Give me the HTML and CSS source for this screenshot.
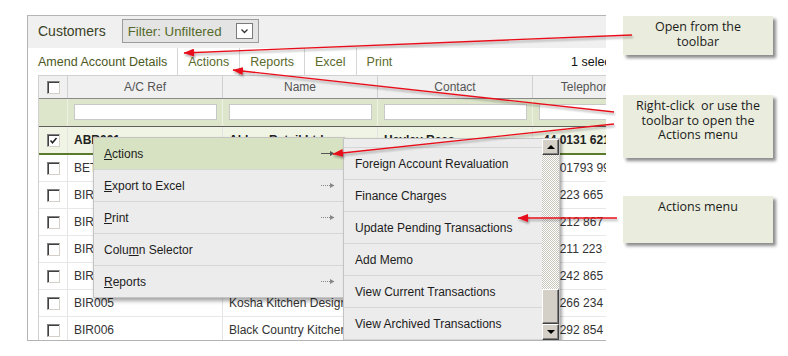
FILE: index.html
```html
<!DOCTYPE html>
<html>
<head>
  <title>Customers - Actions menu</title>
  <link rel="stylesheet" href="styles.css">
</head>
<body>
  <div class="page">
    <div class="grid-panel">
      <div class="panel-head">
        <span class="panel-title">Customers</span>
        <div class="filter">
          <span>Filter: Unfiltered</span>
          <span class="filter-btn">
            <svg width="9" height="6" viewBox="0 0 9 6"><path d="M1.5 1.5 L4.5 4.5 L7.5 1.5" stroke="#333" stroke-width="1.3" fill="none"/></svg>
          </span>
        </div>
      </div>

      <div class="toolbar">
        <span class="tool tool-main">Amend Account Details</span>
        <span class="tool">Actions</span>
        <span class="tool">Reports</span>
        <span class="tool">Excel</span>
        <span class="tool tool-last">Print</span>
        <span class="sel-count">1 selected</span>
      </div>

      <div class="grid">
        <div class="row head-row">
          <div class="cell cell-check"><span class="cb"></span></div>
          <div class="cell">A/C Ref</div>
          <div class="cell">Name</div>
          <div class="cell">Contact</div>
          <div class="cell">Telephone</div>
        </div>
        <div class="row filter-row">
          <div class="cell cell-check"></div>
          <div class="cell"><span class="filter-input"></span></div>
          <div class="cell"><span class="filter-input"></span></div>
          <div class="cell"><span class="filter-input"></span></div>
          <div class="cell"><span class="filter-input"></span></div>
        </div>
        <div class="row data-row selected">
          <div class="cell cell-check"><span class="cb"><svg width="9" height="9" viewBox="0 0 9 9"><path d="M1.5 4.5 L3.5 6.8 L7.5 2" stroke="#222" stroke-width="1.5" fill="none"/></svg></span></div>
          <div class="cell">ABR001</div>
          <div class="cell">Abbey Retail Ltd</div>
          <div class="cell">Hayley Rees</div>
          <div class="cell cell-tel">44 0131 621 4420</div>
        </div>
        <div class="row data-row">
          <div class="cell cell-check"><span class="cb"></span></div>
          <div class="cell">BET001</div>
          <div class="cell">Bettany Builders</div>
          <div class="cell">Carl Bettany</div>
          <div class="cell cell-tel">44 01793 991 204</div>
        </div>
        <div class="row data-row">
          <div class="cell cell-check"><span class="cb"></span></div>
          <div class="cell">BIR001</div>
          <div class="cell">Birchwood Interiors</div>
          <div class="cell">Amy Walsh</div>
          <div class="cell cell-tel">44 223 665 781</div>
        </div>
        <div class="row data-row">
          <div class="cell cell-check"><span class="cb"></span></div>
          <div class="cell">BIR002</div>
          <div class="cell">Birch Lane Supplies</div>
          <div class="cell">Dev Patel</div>
          <div class="cell cell-tel">44 212 867 330</div>
        </div>
        <div class="row data-row">
          <div class="cell cell-check"><span class="cb"></span></div>
          <div class="cell">BIR003</div>
          <div class="cell">Birmingham Tiles</div>
          <div class="cell">Lucy Grant</div>
          <div class="cell cell-tel">44 211 223 908</div>
        </div>
        <div class="row data-row">
          <div class="cell cell-check"><span class="cb"></span></div>
          <div class="cell">BIR004</div>
          <div class="cell">Birkett Joinery</div>
          <div class="cell">Sam Birkett</div>
          <div class="cell cell-tel">44 242 865 117</div>
        </div>
        <div class="row data-row">
          <div class="cell cell-check"><span class="cb"></span></div>
          <div class="cell">BIR005</div>
          <div class="cell">Kosha Kitchen Designs</div>
          <div class="cell">Raj Kosha</div>
          <div class="cell cell-tel">44 266 234 519</div>
        </div>
        <div class="row data-row">
          <div class="cell cell-check"><span class="cb"></span></div>
          <div class="cell">BIR006</div>
          <div class="cell">Black Country Kitchens</div>
          <div class="cell">Joe Price</div>
          <div class="cell cell-tel">44 292 854 662</div>
        </div>
      </div>

      <!-- right-click menu -->
      <div class="ctx-menu">
        <div class="menu-item active">
          <span><u>A</u>ctions</span>
          <svg class="sub-arrow" width="14" height="7" viewBox="0 0 14 7"><line x1="0" y1="3.5" x2="10" y2="3.5" stroke="#555"/><path d="M9 1 L13.5 3.5 L9 6 Z" fill="#555"/></svg>
        </div>
        <div class="menu-item">
          <span><u>E</u>xport to Excel</span>
          <svg class="sub-arrow" width="14" height="7" viewBox="0 0 14 7"><line x1="0" y1="3.5" x2="10" y2="3.5" stroke="#888" stroke-dasharray="1 1"/><path d="M9 1 L13.5 3.5 L9 6 Z" fill="#888"/></svg>
        </div>
        <div class="menu-item">
          <span><u>P</u>rint</span>
          <svg class="sub-arrow" width="14" height="7" viewBox="0 0 14 7"><line x1="0" y1="3.5" x2="10" y2="3.5" stroke="#888" stroke-dasharray="1 1"/><path d="M9 1 L13.5 3.5 L9 6 Z" fill="#888"/></svg>
        </div>
        <div class="menu-item">
          <span>Colu<u>m</u>n Selector</span>
        </div>
        <div class="menu-item">
          <span><u>R</u>eports</span>
          <svg class="sub-arrow" width="14" height="7" viewBox="0 0 14 7"><line x1="0" y1="3.5" x2="10" y2="3.5" stroke="#888" stroke-dasharray="1 1"/><path d="M9 1 L13.5 3.5 L9 6 Z" fill="#888"/></svg>
        </div>
      </div>

      <!-- Actions submenu, scrolled down -->
      <div class="sub-menu">
        <div class="sub-list">
          <div class="sub-item">Allocate Cash</div>
          <div class="sub-item">Foreign Account Revaluation</div>
          <div class="sub-item">Finance Charges</div>
          <div class="sub-item">Update Pending Transactions</div>
          <div class="sub-item">Add Memo</div>
          <div class="sub-item">View Current Transactions</div>
          <div class="sub-item">View Archived Transactions</div>
        </div>
        <div class="sub-scroll">
          <span class="sb-btn"><span class="tri-up"></span></span>
          <span class="sb-track"></span>
          <span class="sb-thumb"></span>
          <span class="sb-btn"><span class="tri-down"></span></span>
        </div>
      </div>
    </div>

    <div class="notes">
      <div class="note note-toolbar">Open from the<br>toolbar</div>
      <div class="note note-right">Right-click&nbsp; or use the<br>toolbar to open the<br>Actions menu</div>
      <div class="note note-menu">Actions menu</div>
    </div>

    <svg class="arrows" width="788" height="356" viewBox="0 0 788 356">
      <defs>
        <marker id="head" markerWidth="11" markerHeight="8" refX="10" refY="4" orient="auto" markerUnits="userSpaceOnUse">
          <path d="M0 0 L10.5 4 L0 8 Z" fill="#e8101a"/>
        </marker>
        <filter id="shade" x="-5%" y="-50%" width="110%" height="200%">
          <feDropShadow dx="1" dy="2" stdDeviation="1.2" flood-color="#000" flood-opacity="0.35"/>
        </filter>
      </defs>
      <g filter="url(#shade)" stroke="#e8101a" stroke-width="1.3" fill="none">
        <line x1="632" y1="35" x2="184" y2="53" marker-end="url(#head)"/>
        <line x1="614" y1="112" x2="233" y2="70" marker-end="url(#head)"/>
        <line x1="614" y1="124" x2="333" y2="154" marker-end="url(#head)"/>
        <line x1="617" y1="218" x2="518" y2="218" marker-end="url(#head)"/>
      </g>
    </svg>
  </div>
</body>
</html>
```

FILE: styles.css
```css
body {
  margin: 0;
  font-family: "Liberation Sans", Arial, sans-serif;
  font-size: 12px;
  color: #333333;
  background-color: #ffffff;
}

.page {
  position: relative;
  display: flex;
  align-items: flex-start;
  width: 788px;
  height: 356px;
  padding: 15px 0 0 27px;
  box-sizing: border-box;
  overflow: hidden;
}

/* grid panel */
.grid-panel {
  position: relative;
  width: 579px;
  height: 326px;
  box-sizing: border-box;
  border: 1px solid #b4b4b4;
  border-right: 0;
  overflow: hidden;
}

.panel-head {
  height: 32px;
  box-sizing: border-box;
  padding: 0 0 2px 10px;
  display: flex;
  align-items: center;
  background-color: #f0f0f0;
}

.panel-title {
  font-size: 14px;
  color: #3a4226;
  margin-right: 16px;
}

.filter {
  width: 137px;
  height: 24px;
  box-sizing: border-box;
  display: flex;
  align-items: center;
  justify-content: space-between;
  padding: 0 5px 0 5px;
  border: 1px solid #9c9c9c;
  background-color: #e4e4e4;
  font-size: 13.3px;
  color: #56692a;
}

.filter-btn {
  width: 17px;
  height: 16px;
  box-sizing: border-box;
  display: flex;
  align-items: center;
  justify-content: center;
  border: 1px solid #7a7a7a;
  background-color: #ffffff;
}

.toolbar {
  width: 610px;
  height: 27px;
  box-sizing: border-box;
  padding: 0 10px;
  display: flex;
  align-items: stretch;
  background-color: #ffffff;
  font-size: 12.5px;
}

.tool {
  display: flex;
  align-items: center;
  padding: 0 10px;
  border-right: 1px solid #d6d6d6;
  color: #5c6b2c;
}

.tool-main {
  padding-left: 0;
  color: #4b5823;
}

.tool-last {
  border-right: 0;
}

.sel-count {
  margin-left: auto;
  display: flex;
  align-items: center;
  color: #111111;
}

/* grid */
.grid {
  margin-left: 10px;
  width: 608px;
  border-left: 1px solid #d0d0d0;
}

.row {
  display: grid;
  grid-template-columns: 29px 155px 155px 155px 112px;
  box-sizing: border-box;
}

.cell {
  display: flex;
  align-items: center;
  padding: 0 6px;
  box-sizing: border-box;
  border-right: 1px solid #e4e4e4;
  white-space: nowrap;
  overflow: hidden;
}

.cell-check {
  justify-content: center;
  padding: 0;
}

.head-row {
  height: 24px;
  border-top: 1px solid #d0d0d0;
  border-bottom: 1px solid #8a8a8a;
  background-color: #f0f0f0;
  color: #555555;
}

.head-row .cell {
  justify-content: center;
  border-right-color: #d0d0d0;
}

.filter-row {
  height: 28px;
  border-bottom: 1px solid #5e5e5e;
  background-color: #dde6cb;
}

.filter-row .cell {
  padding: 0 5px 1px 6px;
  border-right-color: #eef2e4;
}

.filter-input {
  width: 100%;
  height: 16px;
  box-sizing: border-box;
  border: 1px solid #c8c8c8;
  background-color: #ffffff;
}

.data-row {
  height: 27px;
  border-bottom: 1px solid #e8e8e8;
  background-color: #ffffff;
}

.data-row.selected {
  height: 28px;
  border-bottom: 2px solid #5c7a2c;
  background-color: #eff4e4;
  font-weight: bold;
  color: #222222;
}

.cell-tel {
  padding-left: 10px;
}

.cb {
  width: 13px;
  height: 13px;
  box-sizing: border-box;
  display: flex;
  align-items: center;
  justify-content: center;
  border: 1px solid;
  border-color: #808080 #d4d0c8 #d4d0c8 #808080;
  box-shadow: inset 1px 1px #404040;
  background-color: #ffffff;
}

/* context menu */
.ctx-menu {
  position: absolute;
  left: 65px;
  top: 121px;
  width: 252px;
  box-sizing: border-box;
  border: 1px solid #c4c4c4;
  background-color: #ececec;
  box-shadow: 2px 3px 4px rgba(0, 0, 0, 0.35);
  color: #1c1c1c;
}

.menu-item {
  height: 32px;
  box-sizing: border-box;
  display: flex;
  align-items: center;
  justify-content: space-between;
  padding: 0 9px 0 10px;
  border-bottom: 1px solid #d6d6d6;
}

.menu-item:last-child {
  border-bottom: 0;
  height: 31px;
}

.menu-item.active {
  background-color: #d6e2c1;
}

.sub-menu {
  position: absolute;
  left: 315px;
  top: 122px;
  width: 217px;
  height: 220px;
  box-sizing: border-box;
  display: flex;
  border: 1px solid #c4c4c4;
  background-color: #ececec;
  box-shadow: 2px 2px 3px rgba(0, 0, 0, 0.35);
  overflow: hidden;
  color: #1c1c1c;
}

.sub-list {
  flex: 1;
  margin-top: -23px;
}

.sub-item {
  height: 32px;
  box-sizing: border-box;
  display: flex;
  align-items: center;
  padding-left: 11px;
  border-bottom: 1px solid #d6d6d6;
}

.sub-scroll {
  width: 17px;
  height: 201px;
  display: flex;
  flex-direction: column;
}

.sb-btn,
.sb-thumb {
  box-sizing: border-box;
  display: flex;
  align-items: center;
  justify-content: center;
  background-color: #d4d0c8;
  border: 1px solid;
  border-color: #ffffff #404040 #404040 #ffffff;
  box-shadow: inset -1px -1px #808080;
}

.sb-btn {
  height: 16px;
}

.sb-thumb {
  height: 35px;
}

.sb-track {
  flex: 1;
  background: repeating-conic-gradient(#c9c5bd 0 25%, #ffffff 0 50%) 0 0 / 2px 2px;
}

.tri-up,
.tri-down {
  width: 0;
  height: 0;
  border-left: 4px solid transparent;
  border-right: 4px solid transparent;
}

.tri-up {
  border-bottom: 4px solid #000000;
}

.tri-down {
  border-top: 4px solid #000000;
}

/* callouts */
.notes {
  width: 150px;
  margin-left: 17px;
  display: flex;
  flex-direction: column;
  font-family: "Open Sans", sans-serif;
  font-size: 12.5px;
  line-height: 14.5px;
  color: #1b1b1b;
}

.note {
  box-sizing: border-box;
  padding-top: 4px;
  text-align: center;
  background-color: #eaeddd;
  box-shadow: 3px 3px 3px rgba(0, 0, 0, 0.45);
}

.note-toolbar {
  height: 39px;
  margin-top: 1px;
}

.note-right {
  height: 63px;
  margin-top: 40px;
}

.note-menu {
  height: 47px;
  margin-top: 38px;
}

.arrows {
  position: absolute;
  left: 0;
  top: 0;
  pointer-events: none;
}
```
